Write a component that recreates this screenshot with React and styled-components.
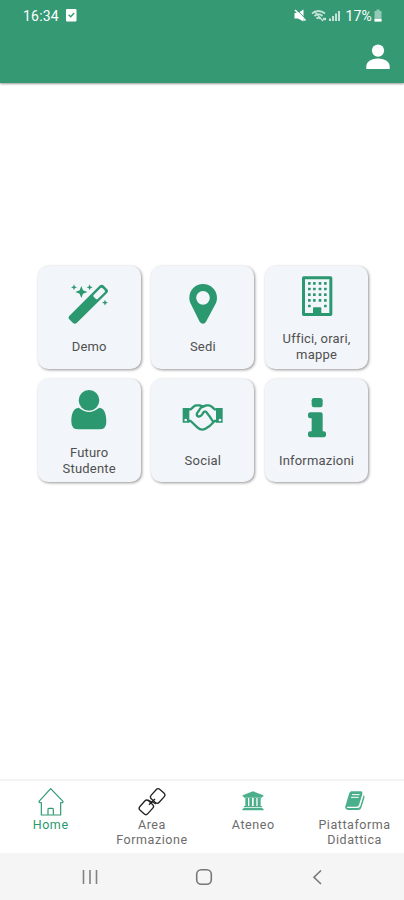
import React from "react";
import styled, { createGlobalStyle } from "styled-components";

const GREEN = "#2c9870";

const GlobalStyle = createGlobalStyle`
  * {
    box-sizing: border-box;
  }

  body {
    margin: 0;
    background: #fff;
    font-family: Roboto, "Liberation Sans", sans-serif;
  }
`;

const WandIcon = () => (
  <Glyph viewBox="115 75 132 132" $size={44}>
    <path
      fillRule="evenodd"
      d="M121 178 L214 85 Q219 81 224 85 L237 98 Q240 102 236 107 L144 198 Q138 202 133 198 L121 186 Q118 182 121 178Z M195 114 L216 93 Q219 91 222 94 L228 100 Q230 103 228 106 L207 126 Q204 128 202 126 L195 119 Q193 116 195 114Z"
    />
    <path d="M158 87 L163 100 L176 105 L163 110 L158 123 L153 110 L140 105 L153 100Z" />
    <path d="M136 82 L138.5 88.5 L145 91 L138.5 93.5 L136 100 L133.5 93.5 L127 91 L133.5 88.5Z" />
    <path d="M183 82 L185.5 88.5 L192 91 L185.5 93.5 L183 100 L180.5 93.5 L174 91 L180.5 88.5Z" />
    <path d="M229 128 L231.5 134.5 L238 137 L231.5 139.5 L229 146 L226.5 139.5 L220 137 L226.5 134.5Z" />
  </Glyph>
);

const PinIcon = () => (
  <Glyph viewBox="108 75 132 132" $size={44}>
    <path
      fillRule="evenodd"
      d="M174 81 C151 81 133 99 133 122 C133 130 135 136 138 142 L164 194 Q168 200 174 200 Q180 200 183 194 L211 142 C214 136 216 130 216 122 C216 99 197 81 174 81Z M174 102 A20.5 20.5 0 1 1 174 143 A20.5 20.5 0 1 1 174 102Z"
    />
  </Glyph>
);

const windowRows = [75, 92, 109, 126, 143];
const windowCols = [149, 164, 181, 197];

const BuildingIcon = () => (
  <Glyph viewBox="110 51 132 132" $size={44}>
    <path
      fillRule="evenodd"
      d="M136 58 H217 Q222 58 222 63 V172 Q222 177 217 177 H136 Q131 177 131 172 V63 Q131 58 136 58Z M140 67 V168 H164 V154 Q164 151 167 151 H186 Q189 151 189 154 V168 H213 V67Z"
    />
    {windowRows.map((y, row) =>
      windowCols
        .filter((x, col) => row < 4 || col === 0 || col === 3)
        .map((x) => <rect key={`${x}-${y}`} x={x} y={y} width="8" height="8" rx="1.5" />)
    )}
  </Glyph>
);

const StudentIcon = () => (
  <Glyph viewBox="114 51 132 132" $size={44}>
    <path d="M149 110 C133 112 127 128 127 152 Q127 175 149 175 H211 Q232 175 232 152 C232 128 226 112 211 110 C202 117 192 121 180 121 C168 121 158 117 149 110Z" />
    <circle cx="180" cy="88" r="33" stroke="#f2f5f9" strokeWidth="4" />
  </Glyph>
);

const HandshakeIcon = () => (
  <Glyph viewBox="108 74 132 132" $size={44}>
    <path
      fillRule="evenodd"
      d="M113 110 H133 V154 H113Z M122 142 a4 4 0 1 0 0.1 0Z M213 110 H233 V154 H213Z M225 142 a4 4 0 1 0 0.1 0Z"
    />
    <g fill="none" stroke={GREEN} strokeWidth="7" strokeLinejoin="round" strokeLinecap="round">
      <path d="M132 114 H137 L147 105 Q150 102 155 102 H164 L174 106 L184 102 H191 Q196 102 200 106 L209 114 H214" />
      <path d="M132 149 H137 L157 168 Q169 179 181 172 L194 164 L209 149 H214" />
      <path d="M175 105 Q167 108 164 114 L156 126 Q154 133 159 135 Q166 137 171 130 L177 121 H183 Q194 134 203 149" />
    </g>
  </Glyph>
);

const InfoIcon = () => (
  <Glyph viewBox="110 75 132 132" $size={44}>
    <rect x="160" y="81" width="33" height="28" rx="7" />
    <path d="M156 124 H187 Q193 124 193 130 V181 H196 Q203 181 203 187 V193 Q203 199 196 199 H156 Q149 199 149 193 V187 Q149 181 156 181 H160 V142 H156 Q149 142 149 136 V130 Q149 124 156 124Z" />
  </Glyph>
);

const HomeIcon = () => (
  <svg width="28" height="30" viewBox="111 49 84 90" fill="none" stroke={GREEN} strokeWidth="3.5" strokeLinejoin="round">
    <path d="M152 54 L189 92 Q190 97 182 96 V133 H124 V96 Q116 97 117 92Z" />
    <path d="M144 132 V116 Q144 113 147 113 H157 Q160 113 160 116 V132" />
  </svg>
);

const ChainIcon = () => (
  <svg width="28" height="30" viewBox="415 49 84 90" fill="none" stroke="#222" strokeWidth="4" strokeLinejoin="round">
    <rect x="-19" y="-16" width="38" height="32" rx="8" transform="translate(474 76) rotate(-48)" />
    <rect x="-19" y="-16" width="38" height="32" rx="8" transform="translate(440 110) rotate(-48)" />
    <path d="M448 102 L466 85 M445 88 L456 94 M459 94 L469 100" />
  </svg>
);

const UniversityIcon = () => (
  <svg width="28" height="30" viewBox="113 49 84 90" fill="#4baf8c">
    <path d="M155 62 L186 74 V78 H182 V81 H128 V78 H124 V74Z" />
    <path d="M132 82 H140 V106 H144 V82 H152 V106 H157 V82 H165 V106 H169 V82 H178 V106 H182 V110 H128 V106 H132Z" />
    <path d="M126 112 H184 V115 H187 V119 H123 V115 H126Z" />
  </svg>
);

const BookIcon = () => (
  <svg width="28" height="30" viewBox="417 49 84 90">
    <path d="M448 62 H477 Q483 63 481 70 L471 103 Q469 108 464 108 H437 Q433 109 436 112 H466 Q473 112 475 106 L485 73 Q489 76 487 82 L478 111 Q476 118 468 118 H438 Q428 117 430 107 L441 70 Q443 63 448 62Z" fill="#4baf8c" />
    <path d="M450 72 H473 M447 80 H470" fill="none" stroke="#fff" strokeWidth="3" />
  </svg>
);

const tiles = [
  { label: "Demo", Icon: WandIcon },
  { label: "Sedi", Icon: PinIcon },
  { label: "Uffici, orari, mappe", Icon: BuildingIcon },
  { label: "Futuro Studente", Icon: StudentIcon },
  { label: "Social", Icon: HandshakeIcon },
  { label: "Informazioni", Icon: InfoIcon },
];

const tabs = [
  { label: "Home", Icon: HomeIcon, active: true },
  { label: "Area Formazione", Icon: ChainIcon },
  { label: "Ateneo", Icon: UniversityIcon },
  { label: "Piattaforma Didattica", Icon: BookIcon },
];

const StatusIcons = () => (
  <svg width="49" height="16" viewBox="0 0 49 16">
    <path d="M0.5 5 H4 L9.5 1.5 V13.5 L4 10.5 H0.5Z" fill="#fff" />
    <path d="M2 1.2 L13 12.2" stroke="#359a74" strokeWidth="1" />
    <path d="M1 2 L11.5 12.5" stroke="#fff" strokeWidth="1.7" />
    <g fill="none" stroke="#c5e3d8" strokeWidth="1.8">
      <path d="M18 5.5 Q24.5 0.5 31 5.5 M20.5 8 Q24.5 4.5 28.5 8 M22.5 10.5 Q24.5 9 26.5 10.5" />
      <path d="M20 3 L29 13" strokeWidth="1.2" />
      <path d="M29 11 H32" strokeWidth="2.4" />
    </g>
    <path d="M36 13 V10.5 M39 13 V8 M42 13 V5.5 M45 13 V3" stroke="#c5e3d8" strokeWidth="2" />
  </svg>
);

const App = () => (
  <Screen>
    <GlobalStyle />
    <Header>
      <StatusBar>
        <StatusGroup>
          16:34
          <svg width="11" height="13" viewBox="0 0 11 13">
            <rect width="10.5" height="12.5" rx="1" fill="#fff" />
            <path d="M2.6 5.8 L4.7 7.8 L8.2 4" fill="none" stroke="#359a74" strokeWidth="1.4" />
          </svg>
        </StatusGroup>
        <StatusGroup $tight>
          <StatusIcons />
          <span>17%</span>
          <svg width="8" height="13" viewBox="0 0 8 13">
            <path d="M2.5 0.5 H5.5 V2 H7.5 V12.5 H0.5 V2 H2.5Z" fill="#93cab5" />
            <path d="M0.5 10 H7.5 V12.5 H0.5Z" fill="#fff" />
          </svg>
        </StatusGroup>
      </StatusBar>
      <Toolbar>
        <svg width="24" height="26" viewBox="0 0 24 26" fill="#fff">
          <circle cx="12" cy="6.6" r="6.1" />
          <path d="M0.3 25 V22.5 C0.3 17.5 6 14.6 12 14.6 C18 14.6 23.7 17.5 23.7 22.5 V25Z" />
        </svg>
      </Toolbar>
    </Header>

    <Main>
      <Tiles>
        {tiles.map(({ label, Icon }) => (
          <Tile key={label}>
            <IconBox>
              <Icon />
            </IconBox>
            <TileLabel>{label}</TileLabel>
          </Tile>
        ))}
      </Tiles>
    </Main>

    <TabBar>
      {tabs.map(({ label, Icon, active }) => (
        <Tab key={label} $active={active}>
          <Icon />
          <TabLabel>{label}</TabLabel>
        </Tab>
      ))}
    </TabBar>

    <SystemBar>
      <svg width="16" height="16" viewBox="0 0 16 16">
        <path d="M1.5 1 V15 M8 1 V15 M14.5 1 V15" stroke="#828282" strokeWidth="1.6" />
      </svg>
      <svg width="18" height="18" viewBox="0 0 18 18">
        <rect x="1.7" y="1.7" width="14.6" height="14.6" rx="4.5" fill="none" stroke="#777" strokeWidth="1.6" />
      </svg>
      <svg width="16" height="16" viewBox="0 0 16 16">
        <path d="M12 1.5 L5 8.2 L12 15" fill="none" stroke="#777" strokeWidth="1.6" />
      </svg>
    </SystemBar>
  </Screen>
);

const Screen = styled.div`
  display: flex;
  flex-direction: column;
  width: 404px;
  height: 900px;
  overflow: hidden;
`;

const Header = styled.header`
  height: 83px;
  background: #359a74;
  box-shadow: 0 1px 2px rgba(0, 0, 0, 0.4);
`;

const StatusBar = styled.div`
  display: flex;
  justify-content: space-between;
  height: 31px;
  padding: 0 22px 0 23px;
`;

const StatusGroup = styled.div`
  display: flex;
  align-items: center;
  gap: ${(props) => (props.$tight ? "2px" : "7px")};
  color: #fff;
  font-size: 14px;
  letter-spacing: 0.2px;
`;

const Toolbar = styled.div`
  display: flex;
  align-items: center;
  justify-content: flex-end;
  height: 52px;
  padding-right: 14px;
`;

const Main = styled.main`
  flex: 1;
  padding: 182.6px 0 0 37.7px;
`;

const Tiles = styled.div`
  display: grid;
  grid-template-columns: repeat(3, 103px);
  grid-auto-rows: 103px;
  gap: 10.7px;
`;

const Tile = styled.div`
  display: flex;
  flex-direction: column;
  align-items: center;
  justify-content: center;
  gap: 10px;
  border-radius: 10px;
  background: #f2f5f9;
  box-shadow: 1px 1px 3px rgba(0, 0, 0, 0.42);
`;

const IconBox = styled.div`
  display: flex;
  align-items: center;
  justify-content: center;
  height: 50px;
`;

const Glyph = styled.svg`
  width: ${(props) => props.$size}px;
  height: ${(props) => props.$size}px;
  fill: ${GREEN};
`;

const TileLabel = styled.div`
  width: 84px;
  color: #505050;
  font-size: 13px;
  line-height: 16px;
  letter-spacing: 0.2px;
  text-align: center;
`;

const TabBar = styled.nav`
  display: grid;
  grid-template-columns: repeat(4, 101.3px);
  height: 74px;
  padding-top: 6px;
  border-top: 2px solid #f3f3f3;
`;

const Tab = styled.div`
  display: flex;
  flex-direction: column;
  align-items: center;
  color: ${(props) => (props.$active ? GREEN : "#6c6c6c")};
`;

const TabLabel = styled.div`
  width: 84px;
  font-size: 12.5px;
  line-height: 15px;
  letter-spacing: 0.55px;
  text-align: center;
`;

const SystemBar = styled.footer`
  display: flex;
  align-items: center;
  justify-content: space-between;
  height: 47px;
  padding: 1px 79px 0 82px;
  background: #f5f5f5;
`;

export default App;
